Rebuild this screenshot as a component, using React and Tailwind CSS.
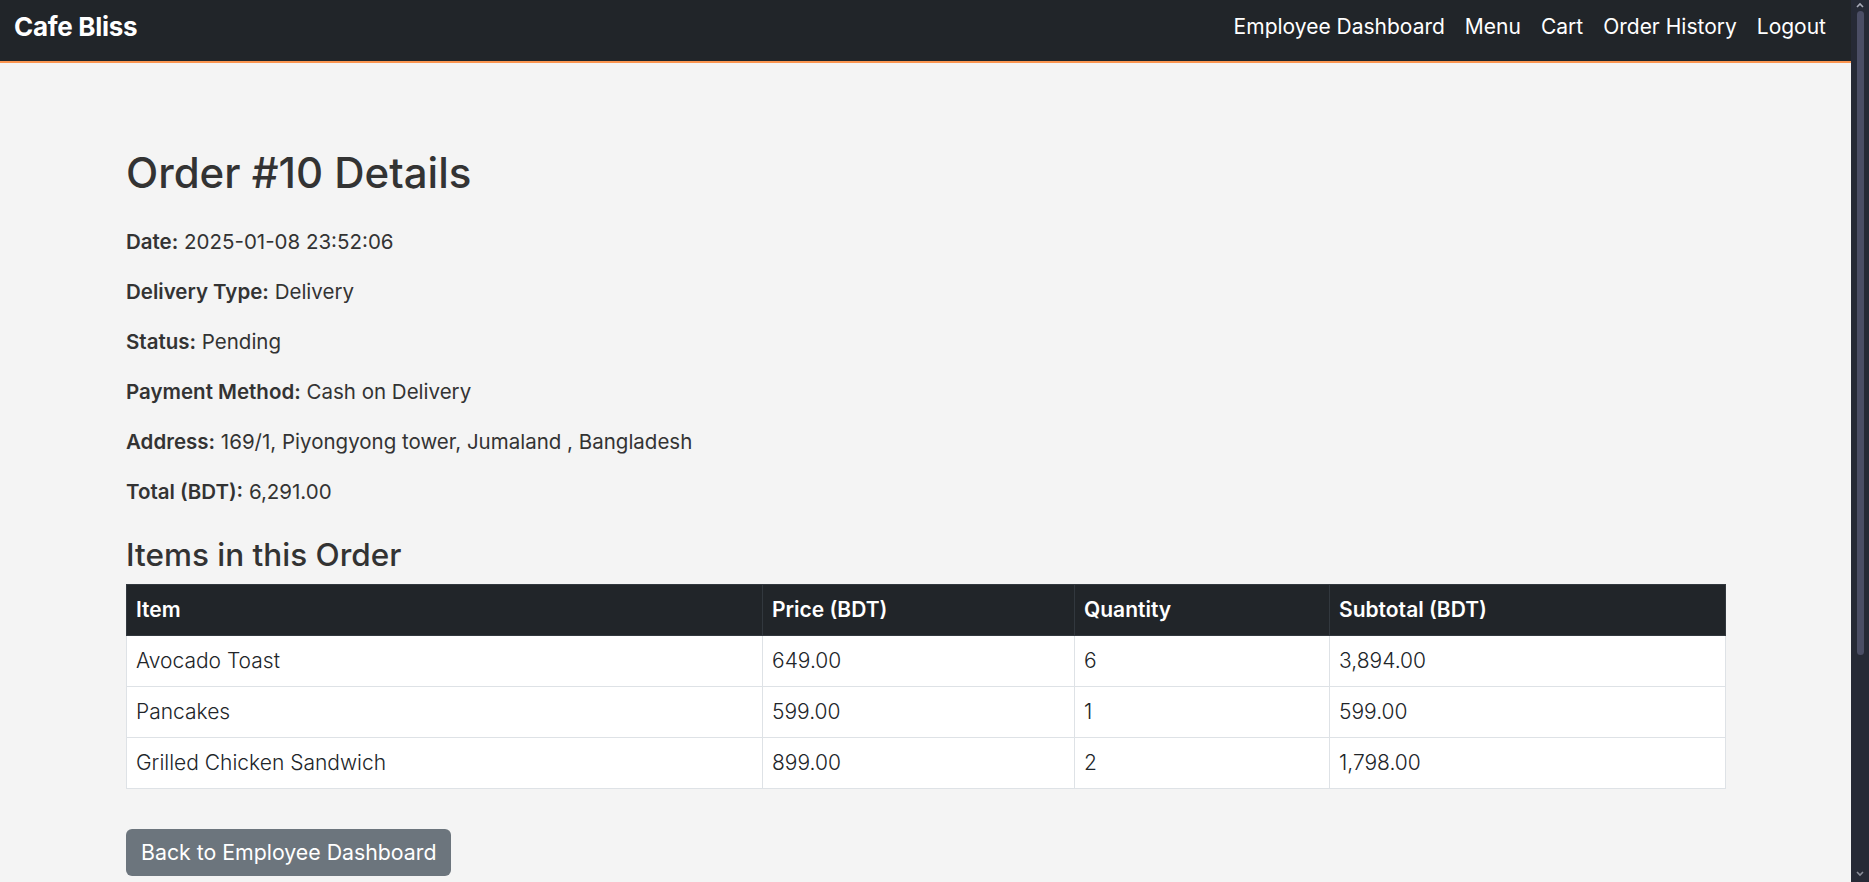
import React from 'react';

const items = [
  { name: 'Avocado Toast', price: '649.00', qty: 6, subtotal: '3,894.00' },
  { name: 'Pancakes', price: '599.00', qty: 1, subtotal: '599.00' },
  { name: 'Grilled Chicken Sandwich', price: '899.00', qty: 2, subtotal: '1,798.00' },
];

const details = [
  ['Date:', '2025-01-08 23:52:06'],
  ['Delivery Type:', 'Delivery'],
  ['Status:', 'Pending'],
  ['Payment Method:', 'Cash on Delivery'],
  ['Address:', '169/1, Piyongyong tower, Jumaland , Bangladesh'],
  ['Total (BDT):', '6,291.00'],
];

function Navbar() {
  return (
    <nav className="h-[63px] shrink-0 bg-[#212529] border-b-2 border-[#fb9550] flex items-start justify-between pl-[14px] pr-[25px] pt-[12px]">
      <a href="#" className="text-white text-[26px] leading-[30px] font-bold tracking-[-0.3px]">
        Cafe Bliss
      </a>
      <ul className="flex items-center gap-5 text-white text-[21px] leading-[30px]">
        <li><a href="#">Employee Dashboard</a></li>
        <li><a href="#">Menu</a></li>
        <li><a href="#">Cart</a></li>
        <li><a href="#">Order History</a></li>
        <li><a href="#">Logout</a></li>
      </ul>
    </nav>
  );
}

function Scrollbar() {
  return (
    <div className="w-[18px] shrink-0 bg-[#262a36] flex flex-col items-center">
      <svg width="10" height="8" viewBox="0 0 10 8" className="mt-[1px]">
        <path d="M2 6 L5 3 L8 6" stroke="#a8abb8" strokeWidth="1.6" fill="none" />
      </svg>
      <div className="w-[7px] h-[644px] mt-[2px] rounded-full bg-[#4b4e65]" />
      <div className="flex-1" />
      <svg width="10" height="8" viewBox="0 0 10 8" className="mb-[4px]">
        <path d="M2 2 L5 5 L8 2" stroke="#8a8d99" strokeWidth="1.6" fill="none" />
      </svg>
    </div>
  );
}

export default function App() {
  return (
    <div className="flex h-screen overflow-hidden bg-[#f4f4f4] font-['Inter','Liberation_Sans',sans-serif]">
      <div className="flex-1 min-w-0 flex flex-col overflow-hidden">
        <Navbar />
        <main className="w-[1600px] ml-[126px] pt-[85px] text-[#333]">
          <h1 className="text-[42px] leading-[50px] font-medium mb-[30px]">Order #10 Details</h1>
          {details.map(([label, value]) => (
            <p key={label} className="text-[20.5px] leading-[27px] mb-[23px]">
              <strong className="font-semibold">{label}</strong> {value}
            </p>
          ))}
          <h3 className="text-[31.5px] leading-[38px] font-medium mt-[31px] mb-[10px]">Items in this Order</h3>
          <table className="w-full border-collapse text-[21px] leading-[26px]">
            <colgroup>
              <col className="w-[636px]" />
              <col className="w-[312px]" />
              <col className="w-[255px]" />
              <col className="w-[396px]" />
            </colgroup>
            <thead>
              <tr className="bg-[#212529] text-white">
                {['Item', 'Price (BDT)', 'Quantity', 'Subtotal (BDT)'].map((h) => (
                  <th key={h} className="text-left font-semibold h-[51px] px-[9px] border border-[#32383e]">
                    {h}
                  </th>
                ))}
              </tr>
            </thead>
            <tbody>
              {items.map((it) => (
                <tr key={it.name} className="bg-white text-[#212529]">
                  <td className="h-[51px] px-[9px] border border-[#dee2e6] font-light">{it.name}</td>
                  <td className="h-[51px] px-[9px] border border-[#dee2e6] font-light">{it.price}</td>
                  <td className="h-[51px] px-[9px] border border-[#dee2e6] font-light">{it.qty}</td>
                  <td className="h-[51px] px-[9px] border border-[#dee2e6] font-light">{it.subtotal}</td>
                </tr>
              ))}
            </tbody>
          </table>
          <button className="mt-[40px] h-[47px] px-[15px] rounded-md bg-[#6c757d] text-white text-[21.3px]">
            Back to Employee Dashboard
          </button>
        </main>
      </div>
      <Scrollbar />
    </div>
  );
}
